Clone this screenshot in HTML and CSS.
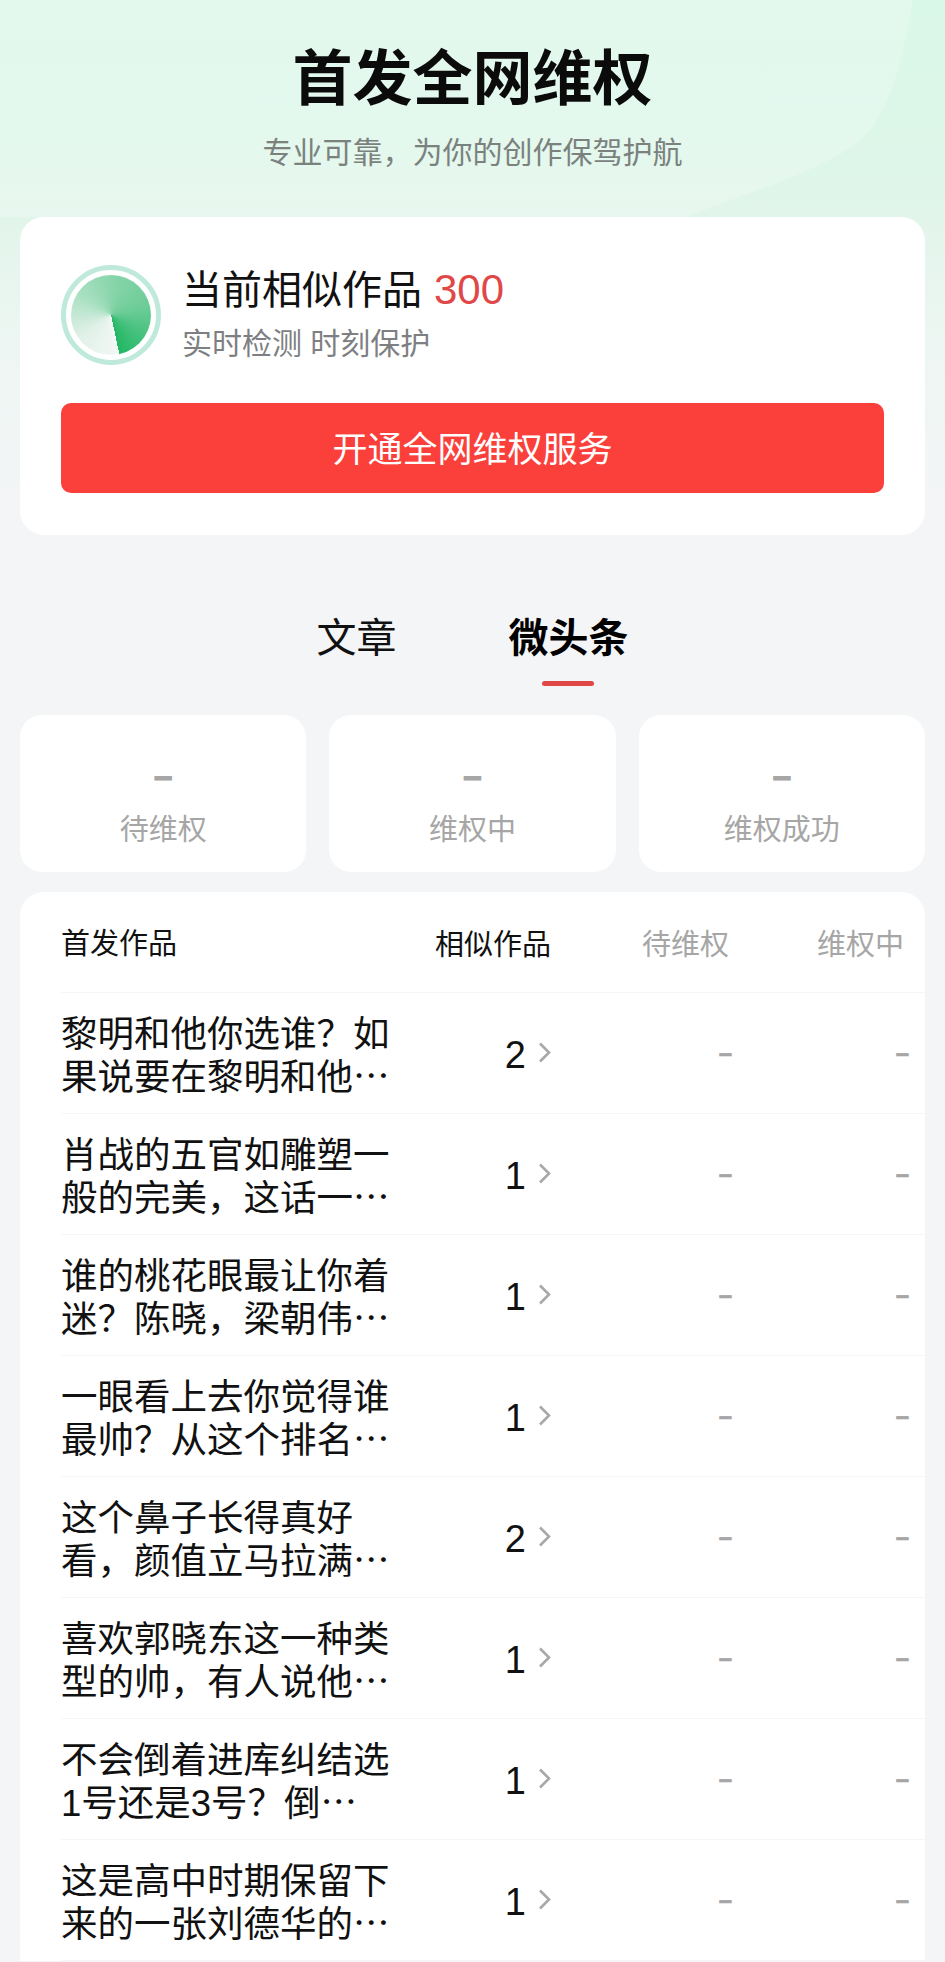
FILE: index.html
```html
<!DOCTYPE html>
<html lang="zh-CN">
<head>
  <meta charset="UTF-8" />
  <meta name="viewport" content="width=device-width, initial-scale=1.0"/>
  <title>首发全网维权</title>
  <link rel="stylesheet" href="styles.css">
</head>
<body>

  <header class="hero">
    <svg class="hero-shape" viewBox="0 0 945 217">
      <path d="M0 0H913C905 50 892 100 874 125C850 158 800 175 693 214L685 217H0Z" fill="#ffffff" fill-opacity="0.22"/>
    </svg>
    <h1>首发全网维权</h1>
    <p>专业可靠，为你的创作保驾护航</p>
  </header>

  <section class="summary">
    <div class="summary-top">
      <div class="radar"><div class="radar-sweep"></div></div>
      <div>
        <div class="summary-title">当前相似作品<span class="summary-count">300</span></div>
        <div class="summary-sub">实时检测 时刻保护</div>
      </div>
    </div>
    <button class="open-btn">开通全网维权服务</button>
  </section>

  <nav class="tabs">
    <span class="tab">文章</span>
    <span class="tab active">微头条</span>
  </nav>

  <section class="stats">
    <div class="stat"><b>–</b><span>待维权</span></div>
    <div class="stat"><b>–</b><span>维权中</span></div>
    <div class="stat"><b>–</b><span>维权成功</span></div>
  </section>

  <section class="list">
    <div class="row head">
      <div class="col-title">首发作品</div>
      <div class="col-similar">相似作品</div>
      <div class="col-wait">待维权</div>
      <div class="col-doing">维权中</div>
    </div>
    <div class="row">
      <div class="col-title">黎明和他你选谁？如果说要在黎明和他⋯</div>
      <div class="col-similar">2<svg class="arrow" viewBox="0 0 13 21"><path d="M2 1.5l9 9-9 9"/></svg></div>
      <div class="col-wait">–</div>
      <div class="col-doing">–</div>
    </div>
    <div class="row">
      <div class="col-title">肖战的五官如雕塑一般的完美，这话一⋯</div>
      <div class="col-similar">1<svg class="arrow" viewBox="0 0 13 21"><path d="M2 1.5l9 9-9 9"/></svg></div>
      <div class="col-wait">–</div>
      <div class="col-doing">–</div>
    </div>
    <div class="row">
      <div class="col-title">谁的桃花眼最让你着迷？陈晓，梁朝伟⋯</div>
      <div class="col-similar">1<svg class="arrow" viewBox="0 0 13 21"><path d="M2 1.5l9 9-9 9"/></svg></div>
      <div class="col-wait">–</div>
      <div class="col-doing">–</div>
    </div>
    <div class="row">
      <div class="col-title">一眼看上去你觉得谁最帅？从这个排名⋯</div>
      <div class="col-similar">1<svg class="arrow" viewBox="0 0 13 21"><path d="M2 1.5l9 9-9 9"/></svg></div>
      <div class="col-wait">–</div>
      <div class="col-doing">–</div>
    </div>
    <div class="row">
      <div class="col-title">这个鼻子长得真好看，颜值立马拉满⋯</div>
      <div class="col-similar">2<svg class="arrow" viewBox="0 0 13 21"><path d="M2 1.5l9 9-9 9"/></svg></div>
      <div class="col-wait">–</div>
      <div class="col-doing">–</div>
    </div>
    <div class="row">
      <div class="col-title">喜欢郭晓东这一种类型的帅，有人说他⋯</div>
      <div class="col-similar">1<svg class="arrow" viewBox="0 0 13 21"><path d="M2 1.5l9 9-9 9"/></svg></div>
      <div class="col-wait">–</div>
      <div class="col-doing">–</div>
    </div>
    <div class="row">
      <div class="col-title">不会倒着进库纠结选1号还是3号？倒⋯</div>
      <div class="col-similar">1<svg class="arrow" viewBox="0 0 13 21"><path d="M2 1.5l9 9-9 9"/></svg></div>
      <div class="col-wait">–</div>
      <div class="col-doing">–</div>
    </div>
    <div class="row">
      <div class="col-title">这是高中时期保留下来的一张刘德华的⋯</div>
      <div class="col-similar">1<svg class="arrow" viewBox="0 0 13 21"><path d="M2 1.5l9 9-9 9"/></svg></div>
      <div class="col-wait">–</div>
      <div class="col-doing">–</div>
    </div>
  </section>

</body>
</html>
```

FILE: styles.css
```css
* {
  box-sizing: border-box;
}

html,
body {
  height: 1962px;
  overflow: hidden;
}

body {
  margin: 0;
  padding: 0 20px;
  background: linear-gradient(180deg, #daf8e8 0, #ddf6e9 150px, #e2f5eb 217px, #eef6f3 360px, #f4f5f7 520px) no-repeat;
  background-color: #f4f5f7;
  color: #111;
  font-family: "Liberation Sans", "Noto Sans CJK SC", sans-serif;
}

.hero {
  position: relative;
  height: 217px;
  margin: 0 -20px;
  padding-top: 40px;
  text-align: center;
}

.hero-shape {
  position: absolute;
  top: 0;
  left: 0;
  width: 100%;
  height: 217px;
}

.hero h1,
.hero p {
  position: relative;
  margin: 0;
}

.hero h1 {
  padding-top: 2px;
  font-size: 60px;
  line-height: 76px;
  font-weight: bold;
  color: #0b0b0b;
}

.hero p {
  margin-top: 17px;
  font-size: 30px;
  line-height: 36px;
  color: #7b827e;
}

.summary {
  position: relative;
  height: 318px;
  padding: 48px 41px 0;
  background: #fff;
  border-radius: 24px;
}

.summary-top {
  display: flex;
  align-items: flex-start;
  gap: 21px;
}

.radar {
  flex: none;
  display: flex;
  align-items: center;
  justify-content: center;
  width: 100px;
  height: 100px;
  border: 5px solid #bfeadb;
  border-radius: 50%;
}

.radar-sweep {
  width: 80px;
  height: 80px;
  border-radius: 50%;
  background: conic-gradient(from 168deg, #f3f8f5, #dff0e7 70deg, #a5dfbf 140deg, #86d4a9 200deg, #6ccc97 270deg, #22b764 360deg);
}

.summary-title {
  font-size: 40px;
  line-height: 50px;
  color: #111;
}

.summary-count {
  margin-left: 12px;
  font-size: 42px;
  color: #e04747;
}

.summary-sub {
  margin-top: 11px;
  font-size: 30px;
  line-height: 36px;
  color: #7d7f82;
}

.open-btn {
  display: block;
  width: 100%;
  height: 90px;
  margin-top: 38px;
  padding-bottom: 5px;
  border: none;
  border-radius: 10px;
  background: #fb403c;
  color: #fff;
  font-family: inherit;
  font-size: 35px;
}

.tabs {
  display: flex;
  justify-content: center;
  gap: 112px;
  height: 180px;
  padding-top: 78px;
  font-size: 40px;
  line-height: 50px;
}

.tab {
  position: relative;
  height: 50px;
  color: #111;
}

.tab.active {
  font-weight: bold;
  color: #000;
}

.tab.active::after {
  content: "";
  position: absolute;
  left: 50%;
  bottom: -23px;
  width: 52px;
  height: 5px;
  margin-left: -27px;
  border-radius: 3px;
  background: #e04747;
}

.stats {
  display: grid;
  grid-template-columns: repeat(3, 1fr);
  gap: 23px;
}

.stat {
  display: flex;
  flex-direction: column;
  align-items: center;
  height: 157px;
  padding-top: 36px;
  background: #fff;
  border-radius: 22px;
  color: #a6a6a6;
}

.stat b {
  font-size: 33px;
  line-height: 50px;
  -webkit-text-stroke: 1.2px #a6a6a6;
}

.stat span {
  margin-top: 11px;
  font-size: 29px;
  line-height: 36px;
}

.list {
  margin-top: 20px;
  padding-left: 41px;
  background: #fff;
  border-radius: 24px 24px 0 0;
}

.row {
  display: flex;
  align-items: center;
  height: 121px;
  border-bottom: 1px solid #f5f5f6;
  font-size: 36.5px;
}

.row.head {
  height: 101px;
  font-size: 29px;
}

.col-title {
  width: 340px;
  padding: 5px 6px 0 0;
  line-height: 43px;
  color: #111;
}

.col-similar {
  display: flex;
  align-items: center;
  justify-content: flex-end;
  gap: 12px;
  width: 150px;
  margin-top: 5px;
  font-size: 38px;
}

.head .col-similar {
  margin-top: 0;
  font-size: 29px;
}

.col-wait,
.col-doing {
  font-size: 24px;
  font-weight: bold;
  color: #a6a6a6;
  text-align: right;
  -webkit-text-stroke: 0.6px #a6a6a6;
}

.head .col-wait,
.head .col-doing {
  font-size: 29px;
  font-weight: normal;
  -webkit-text-stroke: 0;
}

.col-wait {
  width: 181px;
}

.col-doing {
  width: 177px;
}

.head .col-wait {
  width: 178px;
}

.head .col-doing {
  width: 175px;
}

.arrow {
  width: 13px;
  height: 21px;
  margin-bottom: 6px;
  fill: none;
  stroke: #a8a8a8;
  stroke-width: 2.6;
}
```
